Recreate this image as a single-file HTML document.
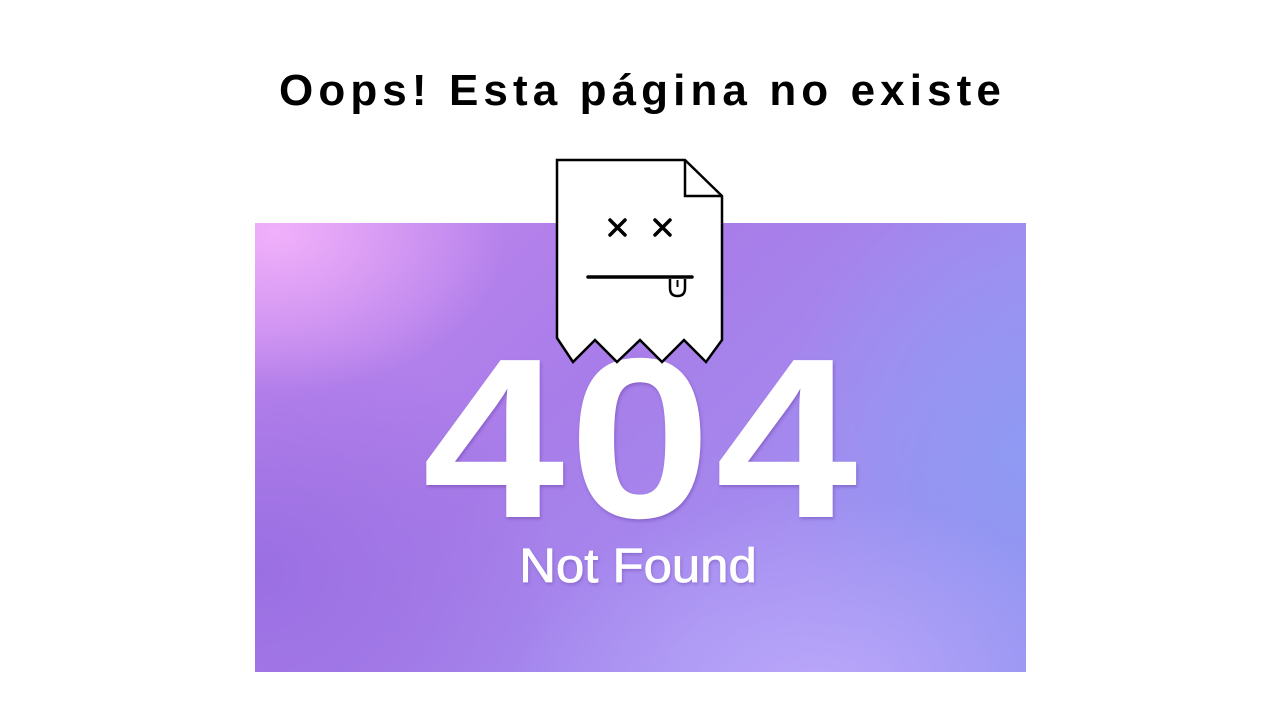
<!DOCTYPE html>
<html><head><meta charset="utf-8"><style>
html,body{margin:0;padding:0;background:#fff;width:1280px;height:720px;overflow:hidden;position:relative;font-family:"Liberation Sans",sans-serif}
h1{position:absolute;left:0;width:1280px;top:66px;margin:0;text-align:center;font-size:44px;font-weight:bold;letter-spacing:5.1px;line-height:50px;color:#000;padding-left:5px;box-sizing:border-box}
.bg{position:absolute;left:255px;top:223px;width:771px;height:449px;overflow:hidden;
background:
radial-gradient(ellipse 230px 160px at 20px 10px,#f0b0fa 0%,rgba(230,160,245,0) 100%),
radial-gradient(ellipse 300px 200px at 560px 470px,#bba8fa 0%,rgba(187,168,250,0) 100%),
radial-gradient(ellipse 250px 300px at 771px 230px,#8f9af3 0%,rgba(143,154,243,0) 100%),
radial-gradient(ellipse 300px 250px at 0px 350px,#9a6fe2 0%,rgba(154,111,226,0) 100%),
linear-gradient(135deg,#c486ee 0%,#a87de9 40%,#a38cef 70%,#9290f0 100%)}
.n404{position:absolute;left:0;width:1280px;top:314px;text-align:center;color:#fff;font-weight:bold;font-size:228px;line-height:250px;letter-spacing:4px;padding-left:4px;box-sizing:border-box;text-shadow:1px 2px 3px rgba(80,40,140,.35);transform:scaleX(1.12);transform-origin:640px 0}
.nf{position:absolute;left:0;width:1280px;top:539px;text-align:center;color:#fff;font-size:48px;line-height:56px;padding-right:4px;box-sizing:border-box;-webkit-text-stroke:0.8px #fff;text-shadow:1px 2px 3px rgba(80,40,140,.35);transform:scaleX(1.06);transform-origin:638px 0}
svg{position:absolute;left:0;top:0}
</style></head><body>
<h1>Oops! Esta página no existe</h1>
<div class="bg"></div>
<div class="n404">404</div>
<div class="nf">Not Found</div>
<svg width="1280" height="720">
<path d="M557,160 L685,160 L722,196 L722,340 L706,362 L684,340 L662,362 L640,340 L617,362 L595,340 L573,362 L557,338 Z" fill="#fff" stroke="#000" stroke-width="2.5" stroke-linejoin="miter"/>
<path d="M685,160 L685,196 L722,196" fill="none" stroke="#000" stroke-width="2.5"/>
<g stroke="#000" stroke-width="3.5" stroke-linecap="round">
<path d="M610,220 L625,235 M625,220 L610,235"/>
<path d="M655,220 L670,235 M670,220 L655,235"/>
<path d="M588,277 L692,277"/>
</g>
<path d="M670,279 L670,288 Q670,296 677.5,296 Q685,296 685,288 L685,279" fill="#fff" stroke="#000" stroke-width="2.5"/>
<path d="M677.5,280 L677.5,287" stroke="#000" stroke-width="2"/>
</svg>
</body></html>
